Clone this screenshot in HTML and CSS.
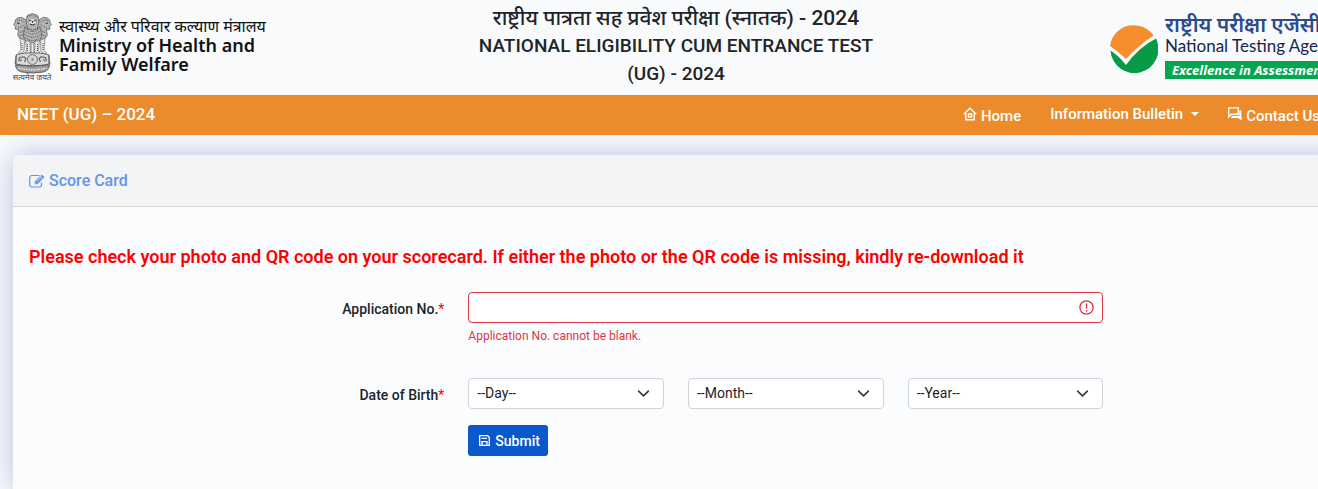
FILE: index.html
```html
<!DOCTYPE html>
<html lang="en">
<head>
<meta charset="utf-8">
<meta name="viewport" content="width=device-width, initial-scale=1">
<title>NEET (UG) – 2024 Score Card</title>
<link rel="stylesheet" href="styles.css">
</head>
<body>
<div class="page">
  <header class="masthead">
    <div class="ministry">
      <div class="emblem">
        <svg class="emblem-art" viewBox="0 0 78 122" aria-hidden="true">
          <g fill="#b4b4b4" stroke="#555" stroke-width="1.4" stroke-linejoin="round">
            <path d="M27 9 Q28 3 34 3 Q39 -1 44 3 Q50 3 51 9 L53 25 Q49 34 39 35 Q29 34 25 25Z"/>
            <path d="M25 13 Q17 6 9 10 Q3 13 4 19 L1 23 L5 27 L4 32 L12 34 Q6 44 14 51 L28 53 L29 31Z"/>
            <path d="M53 13 Q61 6 69 10 Q75 13 74 19 L77 23 L73 27 L74 32 L66 34 Q72 44 64 51 L50 53 L49 31Z"/>
            <path d="M24 27 Q28 37 39 37 Q50 37 54 27 L58 45 L51 59 L45 55 L39 63 L33 55 L27 59 L20 45Z"/>
          </g>
          <g fill="#e8e8e8" stroke="#666" stroke-width="1.3" stroke-linejoin="round">
            <path d="M14 50 L23 55 L22 77 L15 82 L11 80 L16 74Z"/>
            <path d="M64 50 L55 55 L56 77 L63 82 L67 80 L62 74Z"/>
            <path d="M25 55 L34 57 L35 80 L29 83 L24 80 L27 75Z"/>
            <path d="M53 55 L44 57 L43 80 L49 83 L54 80 L51 75Z"/>
            <path d="M36 60 L42 60 L42 81 L36 81Z"/>
          </g>
          <g fill="none" stroke="#4a4a4a" stroke-width="2" stroke-dasharray="2 2">
            <path d="M28 8 Q38 2 50 9M29 30 Q39 38 50 30M23 36 Q39 48 55 36M22 42 Q39 55 56 42M25 49 Q39 61 53 49"/>
            <path d="M8 15 Q18 12 23 20M10 30 Q17 29 24 22M14 39 L22 35M13 46 L23 43M70 15 Q60 12 55 20M68 30 Q61 29 54 22M64 39 L56 35M65 46 L55 43"/>
            <path d="M18 60 V74M29 62 V76M49 62 V76M60 60 V74"/>
          </g>
          <path d="M31 13 Q39 9 47 13 L46 21 Q39 29 32 21Z" fill="#eaeaea" stroke="#666"/>
          <path d="M32 15 L37 16 M46 15 L41 16 M39 16 V20 M34 22 Q39 25 44 22 M8 20 L13 21 M70 20 L65 21" fill="none" stroke="#333" stroke-width="2"/>
          <path d="M7 83 Q39 76 71 83 L74 102 Q39 109 4 102Z" fill="#dadada" stroke="#666" stroke-width="2"/>
          <circle cx="39" cy="93" r="10" fill="#c4c4c4" stroke="#777" stroke-width="2"/>
          <circle cx="39" cy="93" r="6" fill="none" stroke="#eee" stroke-width="3" stroke-dasharray="1.5 1.5"/>
          <circle cx="39" cy="93" r="2" fill="#777"/>
          <path d="M11 96 L13 89 L22 88 L26 91 L23 98 M14 97 L17 92 M67 96 L65 89 L56 88 L52 91 L55 98 M64 97 L61 92 M6 85 V102 M72 85 V102" fill="none" stroke="#6a6a6a" stroke-width="2.5"/>
          <path d="M5 104 Q39 110 73 104 Q72 115 61 118 Q39 122 17 118 Q6 115 5 104Z" fill="#9c9c9c" stroke="#444" stroke-width="1.5"/>
          <path d="M11 110 Q39 117 67 110" fill="none" stroke="#eee" stroke-width="3" stroke-dasharray="3 2"/>
        </svg>
        <span class="emblem-motto" lang="hi">सत्यमेव जयते</span>
      </div>
      <div class="ministry-name">
        <span class="ministry-hindi" lang="hi">स्वास्थ्य और परिवार कल्याण मंत्रालय</span>
        <span>Ministry of Health and<br>Family Welfare</span>
      </div>
    </div>
    <h1 class="exam-title"><span class="exam-hindi" lang="hi">राष्ट्रीय पात्रता सह प्रवेश परीक्षा (स्नातक) - 2024</span><span>NATIONAL ELIGIBILITY CUM ENTRANCE TEST (UG) - 2024</span></h1>
    <div class="agency">
      <svg class="agency-mark" viewBox="0 0 48 48" aria-hidden="true">
        <path d="M0 21 A24 24 0 0 1 43.5 10.5 Q29 20 16 34 Q9 27 0 21Z" fill="#f58e2d"/>
        <path d="M0.5 25.5 Q9 31 16 40 Q29 22 46 13.5 A24 24 0 1 1 .5 25.5Z" fill="#079a47"/>
      </svg>
      <div class="agency-name">
        <span class="agency-hindi" lang="hi">राष्ट्रीय परीक्षा एजेंसी</span>
        <span class="agency-english">National Testing Agency</span>
        <span class="agency-tagline">Excellence in Assessment</span>
      </div>
    </div>
  </header>

  <nav class="navbar">
    <a class="navbar-brand" href="#">NEET (UG) – 2024</a>
    <div class="nav-links">
      <a class="nav-link nav-link-icon" href="#">
        <svg class="nav-icon" viewBox="0 0 14 14" fill="none" stroke="currentColor" stroke-width="1.4" aria-hidden="true"><path d="M.7 7.3 7 1.2l6.3 6.1M2.8 6v6.7h8.4V6"/><path d="M5.5 7h3v3h-3z"/></svg>
        Home</a>
      <a class="nav-link" href="#">Information Bulletin<span class="caret"></span></a>
      <a class="nav-link nav-link-icon" href="#">
        <svg class="nav-icon" viewBox="0 0 14 14" fill="none" stroke="currentColor" stroke-width="1.4" aria-hidden="true"><path d="M.7 10V.9h9.6v6.4H3.2z"/><path d="M12.3 3.5v7.8l-1.6-1.2H3.5" stroke-width="2"/><path d="M11 10h2.6v3.7z" fill="currentColor" stroke="none"/></svg>
        Contact Us</a>
    </div>
  </nav>

  <main class="content">
    <section class="card">
      <h2 class="card-header">
        <svg class="edit-icon" viewBox="0 0 16 14" fill="none" stroke="currentColor" aria-hidden="true"><path d="M10.5 1.5H3A2.3 2.3 0 0 0 .7 3.8v7A2.3 2.3 0 0 0 3 13h7.2a2.3 2.3 0 0 0 2.3-2.2V8.5" stroke-width="1.2"/><path d="M6.2 7.5 12.8.9l2.3 2.3-6.6 6.6H6.2z" fill="currentColor" stroke-width=".8"/><path d="m7.9 7.4 4.4-4.4M11.3 2.3l2.4 2.4" stroke="#f2f4f6" stroke-width=".7"/></svg>
        Score Card</h2>
      <form class="card-body">
        <p class="notice">Please check your photo and QR code on your scorecard. If either the photo or the QR code is missing, kindly re-download it</p>
        <div class="form-row">
          <label class="form-label" for="application">Application No.<span class="required">*</span></label>
          <div class="field">
            <div class="input-wrap">
              <input class="control control-invalid" id="application" type="text" aria-describedby="application-error">
              <svg class="error-icon" viewBox="0 0 15 15" fill="none" stroke="#dc3545" aria-hidden="true"><circle cx="7.5" cy="7.5" r="6.6" stroke-width="1.3"/><path d="M7.5 3.5v5" stroke-width="1.4"/><circle cx="7.5" cy="10.8" r=".9" fill="#dc3545" stroke="none"/></svg>
            </div>
            <div class="error-text" id="application-error">Application No. cannot be blank.</div>
          </div>
        </div>
        <div class="form-row form-row-date">
          <label class="form-label" for="day">Date of Birth<span class="required">*</span></label>
          <div class="field">
            <div class="date-group">
              <div class="select-wrap"><select class="control" id="day" aria-label="Day"><option>--Day--</option></select><svg class="chevron" viewBox="0 0 16 16" aria-hidden="true"><path d="m2 5 6 6 6-6"/></svg></div>
              <div class="select-wrap"><select class="control" aria-label="Month"><option>--Month--</option></select><svg class="chevron" viewBox="0 0 16 16" aria-hidden="true"><path d="m2 5 6 6 6-6"/></svg></div>
              <div class="select-wrap"><select class="control" aria-label="Year"><option>--Year--</option></select><svg class="chevron" viewBox="0 0 16 16" aria-hidden="true"><path d="m2 5 6 6 6-6"/></svg></div>
            </div>
            <button class="submit" type="button">
              <svg class="save-icon" viewBox="0 0 11 11" fill="none" stroke="currentColor" stroke-width="1.3" aria-hidden="true"><path d="M.7.7h8l1.6 1.6v8H.7z"/><path d="M2.5 3.3h5.5M3 10V6.6h5V10"/></svg>
              Submit</button>
          </div>
        </div>
      </form>
    </section>
  </main>
</div>
</body>
</html>
```
FILE: styles.css
```css
* { box-sizing: border-box; }

html { height: 100%; }

body {
  margin: 0;
  height: 100%;
  overflow: hidden;
  background: #f8fafc;
  color: #212529;
  font-family: Roboto, "Noto Sans Devanagari", sans-serif;
  font-size: 14px;
}

/* The page runs a little wider than the window and is cut at the right */
.page {
  width: calc(100% + 34px);
  min-height: 100%;
  display: flex;
  flex-direction: column;
}

.masthead {
  display: grid;
  grid-template-columns: 1fr 1fr 1fr;
  padding-bottom: 7px;
  background: #f8fafc;
}

.ministry {
  display: flex;
  gap: 7px;
  padding: 13px 0 0 12px;
  color: #111;
}

.emblem {
  display: flex;
  flex-direction: column;
  align-items: center;
  width: 40px;
}

.emblem-art { width: 39px; height: 61px; }

.emblem-motto {
  font-size: 8px;
  line-height: 8px;
  white-space: nowrap;
  color: #444;
}

.ministry-name {
  display: flex;
  flex-direction: column;
  padding-top: 4px;
  font-family: "Noto Sans", "Noto Sans Devanagari", sans-serif;
  font-size: 18px;
  font-weight: 600;
  line-height: 19px;
  white-space: nowrap;
}

.ministry-hindi { font-size: 16px; font-weight: 400; }

.exam-title {
  display: flex;
  flex-direction: column;
  margin: 0;
  padding: 4px 24px 0;
  font-size: 19px;
  font-weight: 500;
  line-height: 28px;
  text-align: center;
}

.exam-hindi { font-size: 21px; white-space: nowrap; }

.agency {
  display: flex;
  justify-content: flex-end;
  gap: 7px;
  padding: 15px 3px 0 0;
  white-space: nowrap;
}

.agency-mark { width: 48px; height: 48px; margin-top: 10px; }

.agency-name { display: flex; flex-direction: column; width: 184px; }

.agency-hindi {
  color: #2c4b8a;
  font-size: 21px;
  font-weight: 600;
  line-height: 20px;
}

.agency-english {
  color: #16254f;
  font-family: Lato, sans-serif;
  font-size: 17px;
  line-height: 22px;
}

.agency-tagline {
  margin-top: 4px;
  padding-left: 7px;
  background: #05a64f;
  color: #fff;
  font-family: "Noto Sans", sans-serif;
  font-size: 13px;
  font-style: italic;
  font-weight: 700;
  line-height: 18px;
}

.navbar {
  display: flex;
  justify-content: space-between;
  height: 40px;
  padding: 0 32px 0 17px;
  background: #eb8b2c;
  font-weight: 500;
  line-height: 38px;
  white-space: nowrap;
}

.navbar-brand { color: #fff; font-size: 17px; text-decoration: none; }

.nav-links { display: flex; gap: 29px; }

.nav-link { color: #fff; font-size: 15px; text-decoration: none; }

.nav-link-icon { display: flex; gap: 4px; line-height: 42px; }

.nav-icon { width: 14px; height: 14px; margin-top: 12px; }

.caret {
  display: inline-block;
  margin-left: 8px;
  border: 4px solid transparent;
  border-top-color: #fff;
  border-bottom: 0;
  vertical-align: 3px;
}

.content {
  flex: 1;
  display: flex;
  padding: 20px 13px 0;
  overflow: hidden;
}

.card {
  flex: 1;
  border-radius: 5px 5px 0 0;
  background: #fbfcfe;
  box-shadow: 0 0 28px rgba(60, 85, 170, .34);
}

.card-header {
  display: flex;
  align-items: center;
  gap: 4px;
  margin: 0;
  padding: 0 16px;
  border-bottom: 1px solid #d2d4d6;
  border-radius: 5px 5px 0 0;
  background: #f2f4f6;
  color: #6693ec;
  font-size: 16px;
  font-weight: 500;
  line-height: 51px;
}

.edit-icon { width: 16px; height: 14px; }

.card-body { padding: 38px 16px 0; }

.notice {
  margin: 0 0 23px;
  color: #f00;
  font-size: 18px;
  font-weight: 600;
  line-height: 24px;
}

.form-row {
  display: grid;
  grid-template-columns: 4fr 6fr 2fr;
  margin: 0 -12px;
}

.form-row-date { margin-top: 33px; }

.form-label {
  padding: 7px 12px 0 0;
  font-weight: 500;
  line-height: 21px;
  text-align: right;
}

.required { color: #f00; font-weight: 400; }

.field { padding: 0 12px; }

.input-wrap, .select-wrap { position: relative; }

.control {
  display: block;
  width: 100%;
  height: 31px;
  padding: 0 8px 2px;
  appearance: none;
  border: 1px solid #ced4da;
  border-radius: 4px;
  background: #fff;
  color: #212529;
  font: inherit;
}

.control-invalid { border-color: #dc3545; }

.error-icon {
  position: absolute;
  top: 8px;
  right: 9px;
  width: 15px;
  height: 15px;
}

.error-text {
  margin-top: 4px;
  color: #dc3545;
  font-size: 12px;
  line-height: 18px;
}

.date-group {
  display: grid;
  grid-template-columns: 1fr 1fr 1fr;
  gap: 24px;
}

.chevron {
  position: absolute;
  top: 9px;
  right: 14px;
  width: 13px;
  height: 13px;
  fill: none;
  stroke: #343a40;
  stroke-width: 2;
  stroke-linecap: round;
  stroke-linejoin: round;
  pointer-events: none;
}

.submit {
  display: flex;
  align-items: center;
  gap: 5px;
  height: 31px;
  margin-top: 16px;
  padding: 0 8px 0 11px;
  border: 0;
  border-radius: 3px;
  background: #0a58ca;
  color: #fff;
  font: inherit;
  font-weight: 500;
}

.save-icon { width: 11px; height: 11px; }
```
